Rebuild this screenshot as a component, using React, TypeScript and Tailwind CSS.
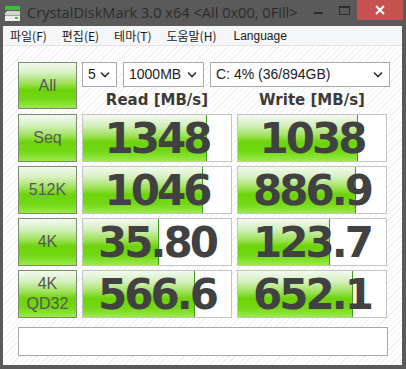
import type { ReactNode } from 'react';

const barGradient =
  'bg-[linear-gradient(to_bottom,#f4f9f1_0%,#d6f0c0_22%,#9fe25a_45%,#6cd408_60%,#74d816_80%,#98ea4c_100%)]';

const rows = [
  { label: ['Seq'], read: '1348', readBar: 124, write: '1038', writeBar: 120 },
  { label: ['512K'], read: '1046', readBar: 120, write: '886.9', writeBar: 118 },
  { label: ['4K'], read: '35.80', readBar: 76, write: '123.7', writeBar: 92 },
  { label: ['4K', 'QD32'], read: '566.6', readBar: 112, write: '652.1', writeBar: 115 },
];

function GreenButton({ children, className = '' }: { children: ReactNode; className?: string }) {
  return (
    <div
      className={`w-[59px] border border-[#7b8a74] ${barGradient} flex flex-col items-center justify-center text-[16px] leading-[20px] text-[#575757] font-['Liberation_Sans',sans-serif] ${className}`}
    >
      {children}
    </div>
  );
}

function ScoreCell({ value, bar }: { value: string; bar: number }) {
  return (
    <div className="relative w-[150px] h-[48px] border border-[#c4c4c4] bg-white overflow-hidden">
      <div
        className={`absolute left-0 top-0 bottom-0 border-r border-[#3f9a22] ${barGradient}`}
        style={{ width: bar }}
      />
      <div className="relative h-full flex items-center justify-center text-[42px] font-bold tracking-[-3px] text-[#414141] font-['DejaVu_Sans',sans-serif]">
        {value}
      </div>
    </div>
  );
}

function Chevron() {
  return (
    <svg width="10" height="7" viewBox="0 0 10 7" className="shrink-0">
      <polyline points="1,1.5 5,5.5 9,1.5" fill="none" stroke="#333" strokeWidth="1.6" />
    </svg>
  );
}

function Select({ value, className }: { value: string; className: string }) {
  return (
    <div
      className={`h-[25px] border border-[#a9a9a9] bg-white flex items-center justify-between pl-[5px] pr-[6px] text-[14px] text-[#222] font-['Liberation_Sans',sans-serif] ${className}`}
    >
      <span>{value}</span>
      <Chevron />
    </div>
  );
}

export default function App() {
  return (
    <div className="w-[406px] h-[369px] bg-[#5a5a5a] flex flex-col pl-[3px] pr-[4px] pb-[4px] overflow-hidden">
      {/* Title bar */}
      <div className="relative h-[26px] flex items-center -mr-[4px] -ml-[3px]">
        <svg width="18" height="18" viewBox="0 0 18 18" className="ml-[4px] mr-[5px] shrink-0">
          <rect x="1" y="2" width="15" height="4" fill="#38c23a" />
          <path d="M1 9 L3 7 L16 7 L16 11 L1 11 Z" fill="#cfd6d0" />
          <rect x="1" y="11" width="15" height="6" fill="#e9eeea" />
          <rect x="1" y="11" width="15" height="1" fill="#9aa39c" />
          <rect x="11" y="13" width="3" height="2" fill="#38c23a" />
        </svg>
        <span className="text-[14.6px] text-[#2c2c2c] font-['Open_Sans',sans-serif] whitespace-nowrap">
          CrystalDiskMark 3.0 x64 &lt;All 0x00, 0Fill&gt;
        </span>
        <div className="ml-auto flex items-start self-start h-[20px]">
          <div className="w-[26px] h-[20px] flex items-center justify-center">
            <div className="w-[9px] h-[2px] bg-[#2c2c2c] mt-[6px]" />
          </div>
          <div className="w-[26px] h-[20px] flex items-center justify-center">
            <div className="w-[11px] h-[9px] border border-[#2c2c2c] border-t-2" />
          </div>
          <div className="w-[46px] h-[20px] bg-[#c75050] flex items-center justify-center mr-[3px]">
            <svg width="10" height="10" viewBox="0 0 10 10">
              <path d="M1 1 L9 9 M9 1 L1 9" stroke="#fff" strokeWidth="2" />
            </svg>
          </div>
        </div>
      </div>

      {/* Menu bar */}
      <div className="h-[20px] bg-[#f5f6f7] border-b border-[#e3e3e3] flex items-center gap-[15px] pl-[7px] text-[12px] text-[#1a1a1a] font-['Noto_Sans_CJK_KR','Noto_Sans',sans-serif]">
        <span>파일(F)</span>
        <span>편집(E)</span>
        <span>테마(T)</span>
        <span>도움말(H)</span>
        <span className="ml-[2px] font-['Liberation_Sans',sans-serif]">Language</span>
      </div>

      {/* Client area */}
      <div className="flex-1 bg-[repeating-linear-gradient(135deg,#ffffff_0px,#ffffff_3px,#f1f1f1_3px,#f1f1f1_4px)] pl-[15px] pt-[16px] flex flex-col">
        <div className="flex gap-[5px]">
          <GreenButton className="h-[47px]">All</GreenButton>
          <div className="flex flex-col">
            <div className="flex gap-[6px]">
              <Select value="5" className="w-[35px]" />
              <Select value="1000MB" className="w-[81px]" />
              <Select value="C: 4% (36/894GB)" className="w-[180px]" />
            </div>
            <div className="flex gap-[5px] mt-[3px] text-[15px] font-bold text-[#3d3b38] font-['DejaVu_Sans',sans-serif] leading-[20px]">
              <div className="w-[150px] text-center">Read [MB/s]</div>
              <div className="w-[150px] text-center">Write [MB/s]</div>
            </div>
          </div>
        </div>

        <div className="flex flex-col gap-[4px] mt-[4px]">
          {rows.map((r) => (
            <div key={r.label.join('')} className="flex gap-[5px]">
              <GreenButton className="h-[48px]">
                {r.label.map((l) => (
                  <span key={l}>{l}</span>
                ))}
              </GreenButton>
              <ScoreCell value={r.read} bar={r.readBar} />
              <ScoreCell value={r.write} bar={r.writeBar} />
            </div>
          ))}
        </div>

        <div className="mt-[9px] w-[370px] h-[29px] border border-[#a8a8a8] bg-white" />
      </div>
    </div>
  );
}
